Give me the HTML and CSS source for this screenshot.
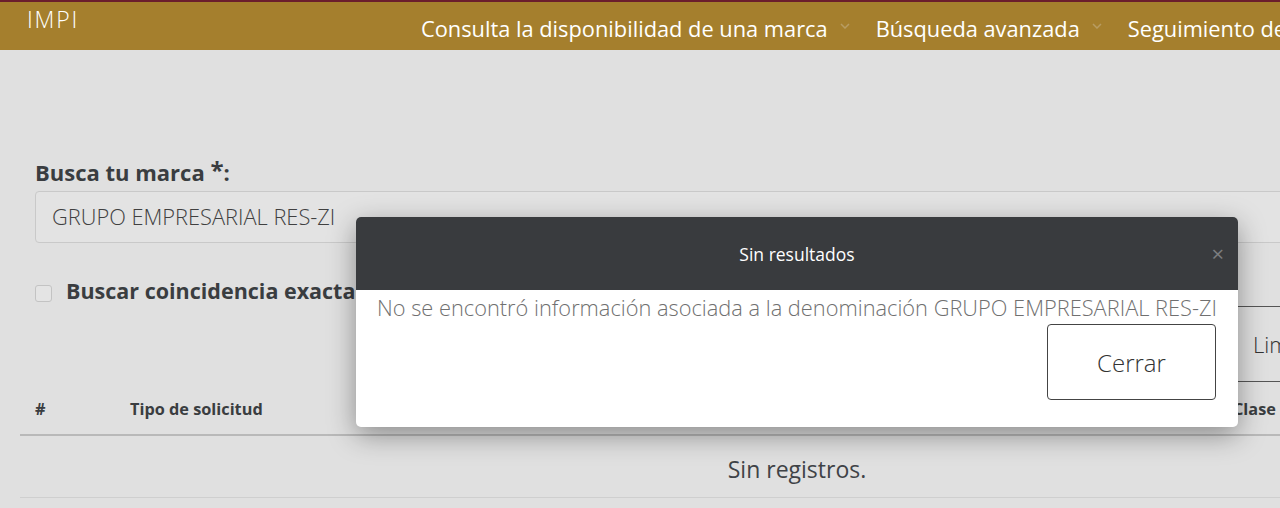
FILE: index.html
```html
<!DOCTYPE html>
<html lang="es">
<head>
<meta charset="utf-8">
<title>IMPI</title>
<link rel="stylesheet" href="styles.css">
</head>
<body>
<div class="page">
  <header class="topbar">
    <div class="brand">IMPI</div>
    <nav class="nav">
      <span class="nav-item">Consulta la disponibilidad de una marca <svg class="chev" width="10" height="6" viewBox="0 0 10 6"><path d="M1 1l4 4 4-4" fill="none" stroke="#b89c62" stroke-width="1.5"/></svg></span>
      <span class="nav-item">Búsqueda avanzada <svg class="chev" width="10" height="6" viewBox="0 0 10 6"><path d="M1 1l4 4 4-4" fill="none" stroke="#b89c62" stroke-width="1.5"/></svg></span>
      <span class="nav-item">Seguimiento de trámites <svg class="chev" width="10" height="6" viewBox="0 0 10 6"><path d="M1 1l4 4 4-4" fill="none" stroke="#b89c62" stroke-width="1.5"/></svg></span>
    </nav>
  </header>

  <main class="content">
    <label class="field-label">Busca tu marca <span class="req">*</span>:</label>
    <div class="input">GRUPO EMPRESARIAL RES-ZI</div>

    <div class="options">
      <label class="check"><span class="box"></span><span class="check-text">Buscar coincidencia exacta</span></label>
      <div class="actions">
        <span class="btn-outline">Limpiar</span>
      </div>
    </div>

    <div class="table">
      <div class="thead">
        <span class="th th-num">#</span>
        <span class="th th-tipo">Tipo de solicitud</span>
        <span class="th th-clase">Clase</span>
      </div>
      <div class="empty">Sin registros.</div>
    </div>
  </main>

  <div class="modal">
    <div class="modal-head">
      <span class="modal-title">Sin resultados</span>
      <span class="modal-close">×</span>
    </div>
    <div class="modal-body">
      <p class="modal-text">No se encontró información asociada a la denominación GRUPO EMPRESARIAL RES-ZI</p>
      <div class="modal-foot"><span class="btn-close">Cerrar</span></div>
    </div>
  </div>
</div>
</body>
</html>
```
FILE: styles.css
```css
html, body {
  margin: 0;
  padding: 0;
  overflow: hidden;
  background: #e0e0e0;
  font-family: "Open Sans", "Noto Sans", sans-serif;
}
.page {
  position: relative;
  width: 1594px;
  height: 508px;
}
.topbar {
  height: 48px;
  background: #a57f2d;
  border-top: 2px solid #6b1d2c;
  display: flex;
  align-items: flex-start;
  color: #fff;
}
.brand {
  font-size: 23px;
  font-weight: 300;
  letter-spacing: 1.8px;
  padding-left: 27px;
  padding-top: 4px;
  width: 394px;
  line-height: 26px;
}
.nav {
  display: flex;
  gap: 26px;
  padding-top: 13px;
  font-size: 21.8px;
  line-height: 28px;
  white-space: nowrap;
}
.nav-item {
  display: inline-flex;
  align-items: center;
  gap: 12px;
}
.chev { margin-top: -6px; }

.content {
  padding: 107px 35px 0 35px;
  color: #3a3d40;
}
.field-label {
  display: block;
  font-weight: 700;
  font-size: 22px;
  line-height: 26px;
}
.req { font-size: 24px; vertical-align: 2px; }
.input {
  margin-top: 6px;
  height: 52px;
  box-sizing: border-box;
  border: 1px solid #c9c9c9;
  border-radius: 4px;
  background: #e3e3e3;
  font-size: 21.8px;
  font-weight: 300;
  color: #404040;
  padding: 11px 16px;
  line-height: 28px;
}
.options {
  display: flex;
  justify-content: space-between;
  margin-top: 34px;
  height: 115px;
}
.check {
  display: flex;
  align-items: center;
  gap: 14px;
  height: 32px;
  align-self: flex-start;
  margin-top: -3px;
}
.box {
  width: 15px;
  height: 15px;
  border: 1px solid #c3c3c3;
  border-radius: 3px;
  background: #e4e4e4;
  margin-top: 6px;
}
.check-text {
  font-weight: 700;
  font-size: 21.5px;
  color: #3a3d40;
}
.actions {
  padding-top: 29px;
  padding-right: 200px;
}
.btn-outline {
  display: inline-flex;
  align-items: center;
  padding: 0 31px;
  height: 76px;
  box-sizing: border-box;
  border: 1px solid #555;
  border-radius: 4px;
  font-size: 22px;
  font-weight: 300;
  color: #333;
}
.table {
  margin: 0 -15px;
}
.thead {
  display: flex;
  height: 44px;
  box-sizing: border-box;
  padding-bottom: 8px;
  align-items: center;
  border-bottom: 2px solid #b9b9b9;
  font-weight: 700;
  font-size: 16.3px;
  color: #3a3d40;
}
.th-num { padding-left: 15px; width: 95px; }
.th-tipo { width: 1103px; }
.empty {
  text-align: center;
  font-size: 23px;
  color: #3f4347;
  height: 55px;
  padding-top: 6px;
  line-height: 55px;
  border-bottom: 1px solid #cfcfcf;
}

.modal {
  position: absolute;
  left: 356px;
  top: 217px;
  width: 882px;
  height: 210px;
  background: #fff;
  border-radius: 5px;
  box-shadow: 0 8px 28px rgba(0, 0, 0, 0.38);
  overflow: hidden;
}
.modal-head {
  height: 73px;
  background: #393b3e;
  display: flex;
  align-items: center;
  justify-content: center;
  position: relative;
  color: #fff;
}
.modal-title { font-size: 17.5px; }
.modal-close {
  position: absolute;
  right: 14px;
  top: 24px;
  font-size: 22px;
  color: #7c7e80;
  line-height: 24px;
}
.modal-body {
  padding: 4px 22px 0 21px;
}
.modal-text {
  margin: 0;
  font-size: 21.8px;
  font-weight: 300;
  color: #707070;
  line-height: 28px;
  white-space: nowrap;
}
.modal-foot {
  display: flex;
  justify-content: flex-end;
  margin-top: 2px;
}
.btn-close {
  display: inline-flex;
  align-items: center;
  justify-content: center;
  width: 169px;
  height: 76px;
  box-sizing: border-box;
  border: 1px solid #444;
  border-radius: 4px;
  font-size: 24px;
  font-weight: 300;
  color: #333;
}
```
